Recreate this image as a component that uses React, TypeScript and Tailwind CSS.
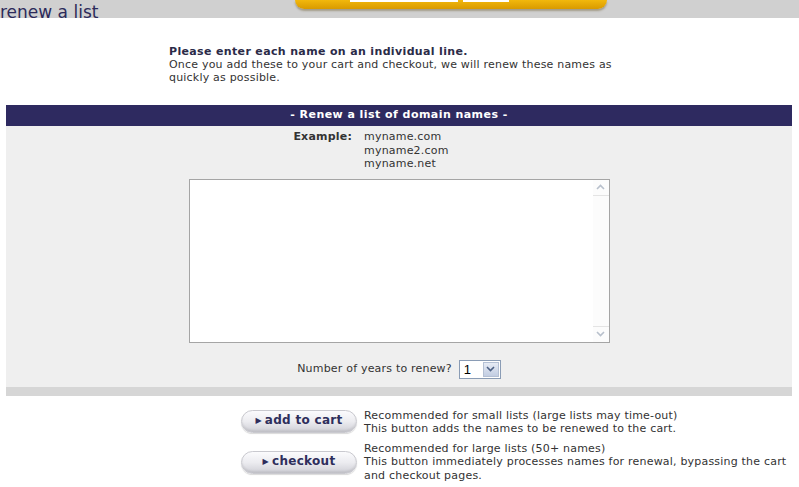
import React from "react";

const ChevronUp: React.FC = () => (
  <svg width="9" height="6" viewBox="0 0 9 6">
    <path d="M1 5 L4.5 1.5 L8 5" fill="none" stroke="#b8c0cc" strokeWidth="1.6" />
  </svg>
);

const ChevronDown: React.FC<{ color?: string }> = ({ color = "#b8c0cc" }) => (
  <svg width="9" height="6" viewBox="0 0 9 6">
    <path d="M1 1 L4.5 4.5 L8 1" fill="none" stroke={color} strokeWidth="1.6" />
  </svg>
);

const PillButton: React.FC<{ label: string }> = ({ label }) => (
  <button className="w-[116px] h-[23px] rounded-full border border-[#c9c9cf] bg-gradient-to-b from-[#fbfbfd] via-[#ececf0] to-[#cfcfd6] shadow-[inset_0_-2px_2px_rgba(0,0,0,0.08),0_1px_1px_rgba(0,0,0,0.15)] flex items-center justify-center gap-[3px] text-[12px] font-bold text-[#2e2e5c] tracking-[0.3px]">
    <span className="text-[8px] leading-none">▶</span>
    {label}
  </button>
);

const App: React.FC = () => {
  return (
    <div className="w-[799px] h-[487px] bg-white overflow-hidden font-['DejaVu_Sans',Verdana,sans-serif] text-[11px] tracking-[0.2px] text-[#333]">
      {/* Top bar */}
      <div className="relative h-[18px] bg-[#d0d0d0]">
        <div className="absolute left-[295px] top-0 w-[312px] h-[9px] rounded-b-[12px] bg-gradient-to-b from-[#f2b80c] to-[#d99a00] shadow-[0_2px_2px_rgba(80,60,0,0.35)]">
          <div className="absolute left-[55px] top-0 w-[108px] h-[2px] bg-white" />
          <div className="absolute left-[168px] top-0 w-[46px] h-[2px] bg-white" />
        </div>
        <div className="absolute left-0 top-[2px] text-[17px] leading-[20px] tracking-normal font-medium text-[#2c2a5a]">renew a list</div>
      </div>

      {/* Instructions */}
      <div className="pl-[169px] pt-[27px] leading-[13px]">
        <div className="font-bold text-[#2b2b48] tracking-[0.35px]">Please enter each name on an individual line.</div>
        <div className="w-[455px]">
          Once you add these to your cart and checkout, we will renew these names as quickly as possible.
        </div>
      </div>

      {/* Panel */}
      <div className="mx-[6px] mt-[21px] w-[786px]">
        <div className="h-[21px] bg-[#2e2a60] text-white font-bold tracking-[0.45px] flex items-center justify-center">
          - Renew a list of domain names -
        </div>
        <div className="bg-[#efefef] pt-[4px] pb-[8px] flex flex-col items-center">
          <div className="w-full grid grid-cols-[346px_1fr] gap-x-[12px] leading-[13.5px]">
            <div className="text-right font-bold">Example:</div>
            <div>
              <div>myname.com</div>
              <div>myname2.com</div>
              <div>myname.net</div>
            </div>
          </div>
          <div className="mt-[8px] w-[421px] h-[164px] border border-[#a5a5a5] bg-white flex">
            <textarea className="flex-1 resize-none outline-none p-1" />
            <div className="w-[16px] flex flex-col justify-between bg-[#fcfcfc]">
              <div className="h-[16px] flex items-center justify-center border-b border-[#e4e4e4]">
                <ChevronUp />
              </div>
              <div className="h-[16px] flex items-center justify-center border-t border-[#e4e4e4]">
                <ChevronDown />
              </div>
            </div>
          </div>
          <div className="mt-[17px] flex items-center gap-[7px]">
            <span>Number of years to renew?</span>
            <div className="w-[42px] h-[19px] border border-[#8a9cb5] bg-white flex items-stretch">
              <span className="flex-1 pl-[4px] text-[13px] leading-[17px] font-['Liberation_Sans',Arial,sans-serif] text-black">1</span>
              <div className="w-[16px] m-[1px] border border-[#b4c0d4] bg-gradient-to-b from-[#e6ebf5] to-[#c2cde2] flex items-center justify-center">
                <ChevronDown color="#4d6185" />
              </div>
            </div>
          </div>
        </div>
        <div className="h-[9px] bg-[#d6d6d6]" />
      </div>

      {/* Actions */}
      <div className="pl-[241px] pt-[13px] flex flex-col gap-[6px] leading-[13.5px]">
        <div className="flex items-start gap-[7px]">
          <div className="pt-[1px]">
            <PillButton label="add to cart" />
          </div>
          <div>
            <div>Recommended for small lists (large lists may time-out)</div>
            <div>This button adds the names to be renewed to the cart.</div>
          </div>
        </div>
        <div className="flex items-start gap-[7px]">
          <div className="pt-[9px]">
            <PillButton label="checkout" />
          </div>
          <div className="w-[430px]">
            <div>Recommended for large lists (50+ names)</div>
            <div>This button immediately processes names for renewal, bypassing the cart and checkout pages.</div>
          </div>
        </div>
      </div>
    </div>
  );
};

export default App;
